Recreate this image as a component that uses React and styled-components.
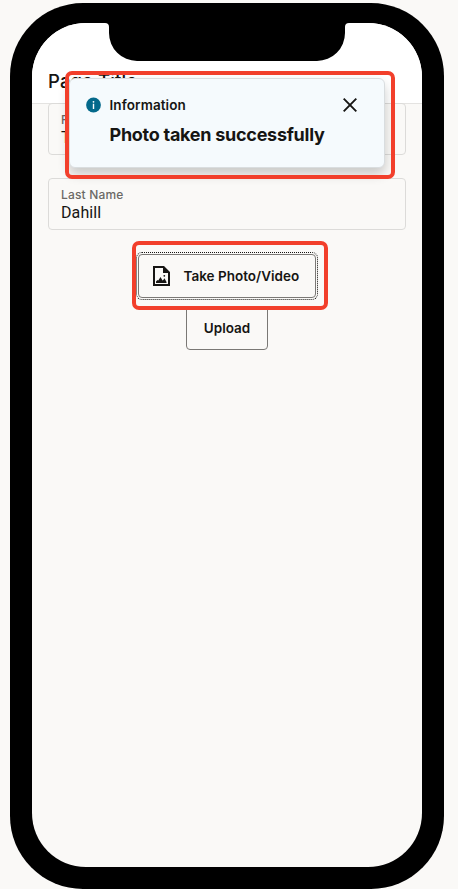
import React from "react";
import styled, { createGlobalStyle } from "styled-components";

const Global = createGlobalStyle`
  * { box-sizing: border-box; }
  html, body { margin: 0; background: #faf9f7; }
  body { font-family: Inter, "Liberation Sans", sans-serif; color: #161513; overflow: hidden; }
`;

const Stage = styled.main`
  width: 458px;
  height: 889px;
  padding: 3px 14px 0 10px;
  overflow: hidden;
`;

const Phone = styled.div`
  width: 434px;
  height: 886px;
  padding: 20px 22px 22px;
  background: #000;
  border-radius: 73px;
`;

const Screen = styled.div`
  position: relative;
  width: 390px;
  height: 844px;
  background: #faf9f7;
  border-radius: 54px;
  overflow: hidden;
`;

const Notch = styled.svg`
  position: absolute;
  left: 73px;
  top: 0;
  display: block;
`;

const Header = styled.header`
  height: 81px;
  padding: 45px 16px 0;
  background: #fff;
  border-bottom: 1px solid #e4e3e1;
`;

const Title = styled.h1`
  margin: 0;
  font-size: 18.5px;
  line-height: 26px;
  font-weight: 500;
  letter-spacing: 0.1px;
`;

const Form = styled.form`
  display: flex;
  flex-direction: column;
  align-items: center;
  padding: 0 16px;
  margin-top: -1px;
`;

const Field = styled.label`
  display: block;
  width: 358px;
  height: 52px;
  margin-bottom: 23px;
  padding: 8px 12px 0;
  border: 1px solid #dcdbd9;
  border-radius: 4px;
`;

const FieldLabel = styled.span`
  display: block;
  font-size: 12px;
  line-height: 16px;
  font-weight: 500;
  letter-spacing: 0.18px;
  color: #6b6966;
`;

const FieldValue = styled.span`
  display: block;
  font-family: Roboto, sans-serif;
  font-size: 16px;
  line-height: 19px;
  letter-spacing: 0.1px;
`;

const Button = styled.button`
  display: flex;
  align-items: center;
  justify-content: ${(p) => (p.$focused ? "flex-start" : "center")};
  width: ${(p) => p.$width}px;
  height: 44px;
  margin: ${(p) => p.$top}px 0 0;
  padding: 0 0 0 ${(p) => (p.$focused ? 14 : 0)}px;
  gap: 13.5px;
  background: transparent;
  border: 1px solid #7a7875;
  border-radius: 4px;
  outline: ${(p) => (p.$focused ? "1px dotted #161513" : "none")};
  outline-offset: 1px;
  color: #161513;
  font: 600 13.5px/18px Inter, sans-serif;
`;

const Toast = styled.section`
  position: absolute;
  left: 37px;
  top: 55px;
  width: 316px;
  height: 90px;
  display: grid;
  grid-template-columns: 16px 1fr 14px;
  grid-template-rows: 20px 1fr;
  column-gap: 8px;
  padding: 16px 27px 0 15px;
  background: #f5fafd;
  border: 1px solid #d9dddf;
  border-radius: 6px;
  box-shadow: 0 6px 12px rgba(0, 0, 0, 0.2);

  svg { align-self: center; }
`;

const Severity = styled.div`
  padding-left: 0.5px;
  font-size: 13.5px;
  line-height: 20px;
  font-weight: 600;
  letter-spacing: 0.1px;
`;

const Summary = styled.div`
  grid-column: 2 / 4;
  padding: 8px 0 0 0.5px;
  font-size: 18px;
  line-height: 24px;
  font-weight: 700;
  letter-spacing: -0.27px;
  white-space: nowrap;
`;

const Highlight = styled.div`
  position: absolute;
  left: ${(p) => p.$x}px;
  top: ${(p) => p.$y}px;
  width: ${(p) => p.$w}px;
  height: ${(p) => p.$h}px;
  border: 4px solid #f23f2b;
  border-radius: 7px;
  pointer-events: none;
`;

const InfoIcon = () => (
  <svg width="16" height="16" viewBox="0 0 16 16">
    <circle cx="8.5" cy="8" r="7.4" fill="#04698b" />
    <circle cx="8.5" cy="4.8" r="0.9" fill="#fff" />
    <path d="M7.8 6.8h1.4V12H7.8z" fill="#fff" />
  </svg>
);

const CloseIcon = () => (
  <svg width="14" height="14" viewBox="0 0 14 14">
    <path d="M.7.7l12.6 12.6M13.3.7L.7 13.3" stroke="#161513" strokeWidth="1.9" />
  </svg>
);

const PhotoIcon = () => (
  <svg width="17" height="20" viewBox="0 0 17 20">
    <path fillRule="evenodd" d="M0 0h11l6 6v14H0zM2 2v16h13V7H10V2z" fill="#161513" />
    <path d="M3 17v-1.5l1.5-1.5.8.6L7.5 11l2 3.6.8-.5 1.2-1.8L13.5 16v1z" fill="#161513" />
    <circle cx="11.3" cy="9.8" r="0.9" fill="#161513" />
  </svg>
);

export default function App() {
  return (
    <Stage>
      <Global />
      <Phone>
        <Screen>
          <Header><Title>Page Title</Title></Header>
          <Form>
            <Field>
              <FieldLabel>First Name</FieldLabel>
              <FieldValue>Tim</FieldValue>
            </Field>
            <Field>
              <FieldLabel>Last Name</FieldLabel>
              <FieldValue>Dahill</FieldValue>
            </Field>
            <Button type="button" $width={178} $top={1} $focused>
              <PhotoIcon />
              <span>Take Photo/Video</span>
            </Button>
            <Button type="button" $width={82} $top={8}>Upload</Button>
          </Form>
          <Notch width="244" height="38" viewBox="0 0 244 38">
            <path d="M0 0h244q-4 0-4 4v6a28 28 0 0 1-28 28H32A28 28 0 0 1 4 10V4Q4 0 0 0z" />
          </Notch>
          <Toast role="status">
            <InfoIcon />
            <Severity>Information</Severity>
            <CloseIcon />
            <Summary>Photo taken successfully</Summary>
          </Toast>
          <Highlight $x={33} $y={48} $w={330} $h={108} />
          <Highlight $x={100} $y={218} $w={196} $h={69} />
        </Screen>
      </Phone>
    </Stage>
  );
}
